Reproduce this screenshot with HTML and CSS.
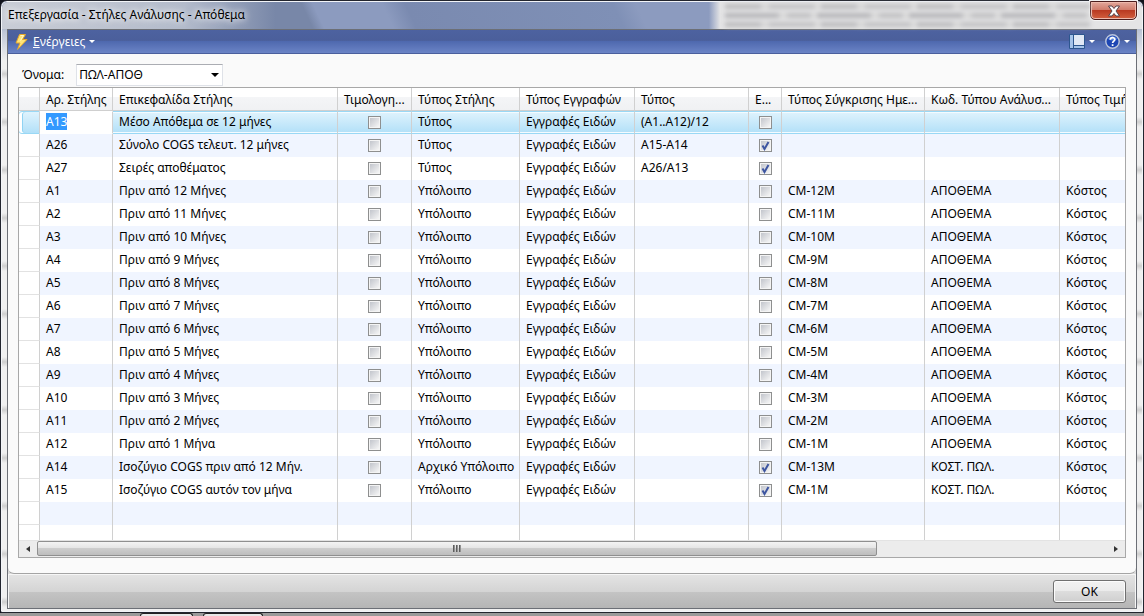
FILE: index.html
```html
<!DOCTYPE html>
<html lang="el">
<head>
<meta charset="utf-8">
<title>Επεξεργασία - Στήλες Ανάλυσης - Απόθεμα</title>
<link rel="stylesheet" href="styles.css">
</head>
<body>
<div class="window">
  <header class="titlebar">
    <h1 class="title">Επεξεργασία - Στήλες Ανάλυσης - Απόθεμα</h1>
    <div class="glass" aria-hidden="true"><i></i><i></i><i></i></div>
    <button class="close" type="button" aria-label="Κλείσιμο">
      <svg width="14" height="12" viewBox="0 0 14 12"><path d="M1.5 1h3.500L7 3.500 9 1h3.500L9 6l3.500 5H9L7 8.500 5 11H1.500L5 6z" fill="#fff" stroke="#56424a" stroke-width="1"/></svg>
    </button>
  </header>
  <div class="client">
    <nav class="toolbar">
      <button class="tool" type="button">
        <svg class="bolt" width="16" height="18" viewBox="0 0 16 18"><path d="M6.500 1.500h6L9.500 6.500h4.500L4.500 16.500l2.500-6.500h-4z" fill="#ffe477" stroke="#e6a82a"/><path d="M7.500 2.500h3L7.500 7.500" fill="none" stroke="#fffbd0"/></svg>
        <span><u>Ε</u>νέργειες</span>
        <i class="arrow"></i>
      </button>
      <div class="tools">
        <button class="tool" type="button" aria-label="Προβολή">
          <svg width="16" height="15" viewBox="0 0 16 15"><path d="M.5.500h15v14H.500z" fill="#a5c3ea" stroke="#2d568f"/><path d="M4.500 1v13M4 11.500h11" stroke="#2d568f" fill="none"/><path d="M5 1h10v10H5z" fill="#e1e8f5"/></svg>
          <i class="arrow"></i>
        </button>
        <button class="tool" type="button" aria-label="Βοήθεια">
          <svg width="15" height="15" viewBox="0 0 15 15"><circle cx="7.500" cy="7.500" r="6.700" fill="#1d46b4" stroke="#bcc6dc" stroke-width="1.400"/><path d="M3 5a5 5 0 0 1 9 0q-4 3-9 0z" fill="#5a83dc"/><path d="M5.300 5.800c0-2.800 4.500-2.800 4.500-.3 0 1.600-2.200 1.600-2.200 3.500M7.600 10.300v1.700" fill="none" stroke="#fff" stroke-width="1.700"/></svg>
          <i class="arrow"></i>
        </button>
      </div>
    </nav>
    <main class="page">
      <div class="field">
        <label for="name">Όνομα:</label>
        <select id="name" class="combo"><option>ΠΩΛ-ΑΠΟΘ</option></select>
      </div>
      <section class="grid">
        <div class="viewport">
          <table class="lines">
            <colgroup><col class="c-mark"><col class="c-no"><col class="c-head"><col class="c-inv"><col class="c-type"><col class="c-entry"><col class="c-formula"><col class="c-flag"><col class="c-cmp"><col class="c-code"><col class="c-value"></colgroup>
            <thead><tr><th></th><th>Αρ. Στήλης</th><th>Επικεφαλίδα Στήλης</th><th>Τιμολογη...</th><th>Τύπος Στήλης</th><th>Τύπος Εγγραφών</th><th>Τύπος</th><th>Ε...</th><th>Τύπος Σύγκρισης Ημε...</th><th>Κωδ. Τύπου Ανάλυσ...</th><th>Τύπος Τιμής</th></tr></thead>
            <tbody id="rows"></tbody>
          </table>
        </div>
        <div class="scrollbar">
          <button class="step" type="button" aria-label="Αριστερά"><i class="left"></i></button>
          <div class="track"><div class="thumb"><i></i><i></i><i></i></div></div>
          <button class="step" type="button" aria-label="Δεξιά"><i class="right"></i></button>
        </div>
      </section>
    </main>
    <footer class="actions"><button class="ok" type="button">OK</button></footer>
  </div>
</div>
<div class="behind"><span></span><span></span></div>
<script src="rows.js"></script>
</body>
</html>
```
FILE: rows.js
```js
const E = "Εγγραφές Ειδών", Y = "Υπόλοιπο", A = "ΑΠΟΘΕΜΑ", K = "ΚΟΣΤ. ΠΩΛ.";
const rows = [
  ["A13", "Μέσο Απόθεμα σε 12 μήνες", "Τύπος", "(A1..A12)/12", false, "", ""],
  ["A26", "Σύνολο COGS τελευτ. 12 μήνες", "Τύπος", "A15-A14", true, "", ""],
  ["A27", "Σειρές αποθέματος", "Τύπος", "A26/A13", true, "", ""]
];
for (let n = 1; n <= 12; n++) {
  const m = 13 - n;
  rows.push(["A" + n, "Πριν από " + m + (m === 1 ? " Μήνα" : " Μήνες"), Y, "", false, "CM-" + m + "M", A]);
}
rows.push(["A14", "Ισοζύγιο COGS πριν από 12 Μήν.", "Αρχικό Υπόλοιπο", "", true, "CM-13M", K]);
rows.push(["A15", "Ισοζύγιο COGS αυτόν τον μήνα", Y, "", true, "CM-1M", K]);

const check = (on, label) =>
  `<input type="checkbox" aria-label="${label}"${on ? " checked" : ""}>`;
const cells = list => "<tr><td>" + list.join("</td><td>") + "</td></tr>";
const blank = cells(Array(11).fill(""));

document.getElementById("rows").innerHTML = rows.map(([no, head, type, formula, flag, cmp, code], i) =>
  cells(["", i ? no : `<mark>${no}</mark>`, head, check(false, "Τιμολογημένο " + no), type, E, formula,
    check(flag, "Εμφάνιση " + no), cmp, code, cmp ? "Κόστος" : ""])
).join("") + blank + blank;
```
FILE: styles.css
```css
* { box-sizing: border-box; }
body {
  margin: 0;
  height: 100vh;
  display: flex;
  flex-direction: column;
  background: #10131c;
  color: #000;
  font: 12px/16px "Noto Sans", "Open Sans", sans-serif;
}
button, select, input { font: inherit; margin: 0; }
.window {
  flex: 1;
  min-height: 0;
  display: flex;
  flex-direction: column;
  padding: 0 6px 3px;
  border: 1px solid #22252e;
  border-radius: 7px 7px 2px 2px;
  background:
    linear-gradient(#8b9bbd 0, #b9c3d800 60px),
    repeating-linear-gradient(#f0f0f0 0 20px, #cfcfcf 25px, #f0f0f0 30px 48px);
  box-shadow: inset 0 0 0 1px #f2f4f8;
}
.titlebar {
  height: 27px;
  flex: none;
  display: flex;
  align-items: flex-start;
  margin: 1px -5px 0;
  border-radius: 6px 6px 0 0;
  background:
    linear-gradient(90deg, #c9cdd6 0, #b3bbcb 16%, #b3bbcb00 24%, transparent 62%, #e4e4e5 63%),
    linear-gradient(65deg, #7887a8 0 27%, #8c9bbf 28% 34%, #7a8ab0 36%, #7f90b6 54%, #8c9bbf 56%);
}
.title {
  margin: 1px 0 0;
  padding: 3px 6px;
  font-size: 12px;
  line-height: 18px;
  font-weight: 400;
  white-space: nowrap;
  text-shadow: 0 0 6px #fff, 0 0 10px #fff;
}
.glass {
  width: 32%;
  margin-left: auto;
  padding-top: 2px;
  display: grid;
  gap: 4px;
  filter: blur(2px);
}
.glass i { height: 5px; background: repeating-linear-gradient(90deg, #bcbcbe 0 34px, #d6d6d6 38px 42px, #c2c2c4 46px 88px, #dadada 92px 96px); }
.glass i:nth-child(2) { background: repeating-linear-gradient(90deg, #b6b6b9 0 52px, #d8d8d8 56px 60px, #bfbfc1 64px 84px, #dadada 88px 92px); }
.close {
  width: 47px;
  height: 19px;
  margin: -1px 5px 0 0;
  padding: 0;
  display: flex;
  align-items: center;
  justify-content: center;
  border: 1px solid #4c1d1d;
  border-radius: 0 0 5px 5px;
  background: linear-gradient(#e2a79b 0, #d07a69 48%, #b93a22 50%, #d3603f 100%);
  box-shadow: inset 0 0 0 1px #eeb9ac, 0 0 0 1px #f4f4f4;
}
.client {
  flex: 1;
  min-height: 0;
  display: flex;
  flex-direction: column;
  border: 1px solid #6c6f76;
  background: #dcdcdc;
}
.toolbar {
  height: 24px;
  flex: none;
  display: flex;
  align-items: center;
  justify-content: space-between;
  padding: 0 6px 0 5px;
  border-bottom: 1px solid #4a5f9d;
  background: linear-gradient(#4d62a0 0, #4b5f9b 45%, #4f69af 50%, #6b84c6 100%);
}
.tools { display: flex; gap: 10px; }
.tool {
  display: flex;
  align-items: center;
  gap: 4px;
  padding: 0;
  border: 0;
  background: none;
  color: #fff;
}
.arrow { border: 3px solid transparent; border-top-color: #fff; border-bottom: 0; }
.page {
  flex: 1;
  min-height: 0;
  display: flex;
  flex-direction: column;
  gap: 1px;
  padding: 10px 10px 15px;
  border-bottom: 1px solid #a4a4a4;
  border-radius: 0 0 6px 6px;
  background: #fafafa;
}
.field { display: flex; align-items: center; gap: 12px; padding-left: 4px; }
.combo {
  width: 147px;
  height: 22px;
  padding: 0 2px;
  border: 1px solid #dfe2e8;
  border-top-color: #abadb3;
  border-radius: 0;
  appearance: none;
  color: #000;
  background: #fff url("data:image/svg+xml,%3Csvg xmlns='http://www.w3.org/2000/svg' width='8' height='4'%3E%3Cpath d='M0 0h8L4 4z'/%3E%3C/svg%3E") no-repeat right 3px center;
}
.grid {
  flex: 1;
  min-height: 0;
  display: flex;
  flex-direction: column;
  border: 1px solid #a8a8a8;
  background: #fff;
}
.viewport { flex: 1; min-height: 0; overflow: hidden; }
.lines { width: 1121px; table-layout: fixed; border-collapse: separate; border-spacing: 0; }
.c-mark { width: 21px; }
.c-no { width: 73px; }
.c-head { width: 225px; }
.c-inv { width: 74px; }
.c-type { width: 108px; }
.c-entry { width: 115px; }
.c-formula { width: 114px; }
.c-flag { width: 33px; }
.c-cmp { width: 143px; }
.c-code { width: 135px; }
.c-value { width: 80px; }
th, td {
  height: 23px;
  padding: 0 0 0 6px;
  border-right: 1px solid #d0d0d0;
  text-align: left;
  font-weight: 400;
  white-space: nowrap;
  overflow: hidden;
}
td { padding-bottom: 2px; }
th { padding-top: 2px; border-bottom: 1px solid #cfcfcf; background: linear-gradient(#fff 0 40%, #f4f5f7 40%, #f0f1f3); }
tbody tr:nth-child(even) { background: #f0f5ff; }
tbody td:first-child { background: #fff; border-bottom: 1px solid #e2e2e2; }
tbody tr:first-child td { background: linear-gradient(#dff3fd, #b2e0f8); border-top: 1px solid #99d8f5; border-bottom: 1px solid #99d8f5; box-shadow: inset 0 1px #f4fbff, inset 0 -1px #f4fbff; }
tbody tr:first-child td:first-child { border-radius: 3px 0 0 3px; box-shadow: inset 3px 0 #fff, inset 4px 0 #8fd3f3; }
tbody tr:first-child td:nth-child(2) { background: #fff; border-color: #fff #d0d0d0 #fff #fff; box-shadow: none; }
mark { background: #3399ff; color: #fff; }
td:nth-child(4), td:nth-child(8) { padding: 0; text-align: center; }
input[type="checkbox"] {
  width: 13px;
  height: 13px;
  display: block;
  margin: 0 auto;
  appearance: none;
  padding: 1px;
  border: 1px solid #8e8f8f;
  background:
    linear-gradient(135deg, #c2c5cc, #f6f6f6) content-box,
    linear-gradient(#f4f4f4, #f4f4f4) border-box;
}
input[type="checkbox"]:checked {
  background:
    url("data:image/svg+xml,%3Csvg xmlns='http://www.w3.org/2000/svg' width='11' height='11'%3E%3Cpath d='M2.500 5.500L4.500 9L8.500 2' fill='none' stroke='%233d55a0' stroke-width='2'/%3E%3C/svg%3E") no-repeat,
    linear-gradient(135deg, #c2c5cc, #f6f6f6) content-box,
    linear-gradient(#f4f4f4, #f4f4f4) border-box;
}
.scrollbar { height: 17px; flex: none; display: flex; border-top: 1px solid #e3e3e3; background: #ececec; }
.step { width: 18px; padding: 0; display: grid; place-items: center; border: 0; background: none; }
.left, .right { border: 3px solid transparent; }
.left { border-right: 4px solid #333; border-left: 0; }
.right { border-left: 4px solid #333; border-right: 0; }
.track { flex: 1; }
.thumb {
  width: 78.5%;
  height: 15px;
  display: flex;
  align-items: center;
  justify-content: center;
  gap: 1px;
  border: 1px solid #8f8f8f;
  border-radius: 2px;
  background: linear-gradient(#f4f4f4 0, #e4e4e4 48%, #cdcdcd 50%, #bdbdbd 100%);
}
.thumb i { width: 2px; height: 7px; background: linear-gradient(90deg, #444, #aaa); }
.actions {
  height: 34px;
  flex: none;
  display: flex;
  align-items: center;
  justify-content: flex-end;
  padding: 0 9px;
  border: 1px solid #f6f6f6;
  border-bottom: 0;
  background: linear-gradient(#e3e3e3 0, #d4d4d4 50%, #c4c4c4 51%, #b5b5b5 100%);
}
.ok {
  width: 73px;
  height: 23px;
  padding: 0;
  border: 1px solid #707070;
  border-radius: 3px;
  color: #000;
  background: linear-gradient(#f2f2f2 0, #ebebeb 48%, #dddddd 50%, #cfcfcf 100%);
  box-shadow: inset 0 0 0 1px #fcfcfc;
}
.behind { height: 3px; flex: none; display: flex; gap: 10px; padding: 0 0 0 140px; background: #9a9a9a; }
.behind span { width: 53px; border: 1px solid #222; border-bottom: 0; border-radius: 3px 3px 0 0; background: #e8e8e8; }
.behind span + span { width: 60px; }
```
